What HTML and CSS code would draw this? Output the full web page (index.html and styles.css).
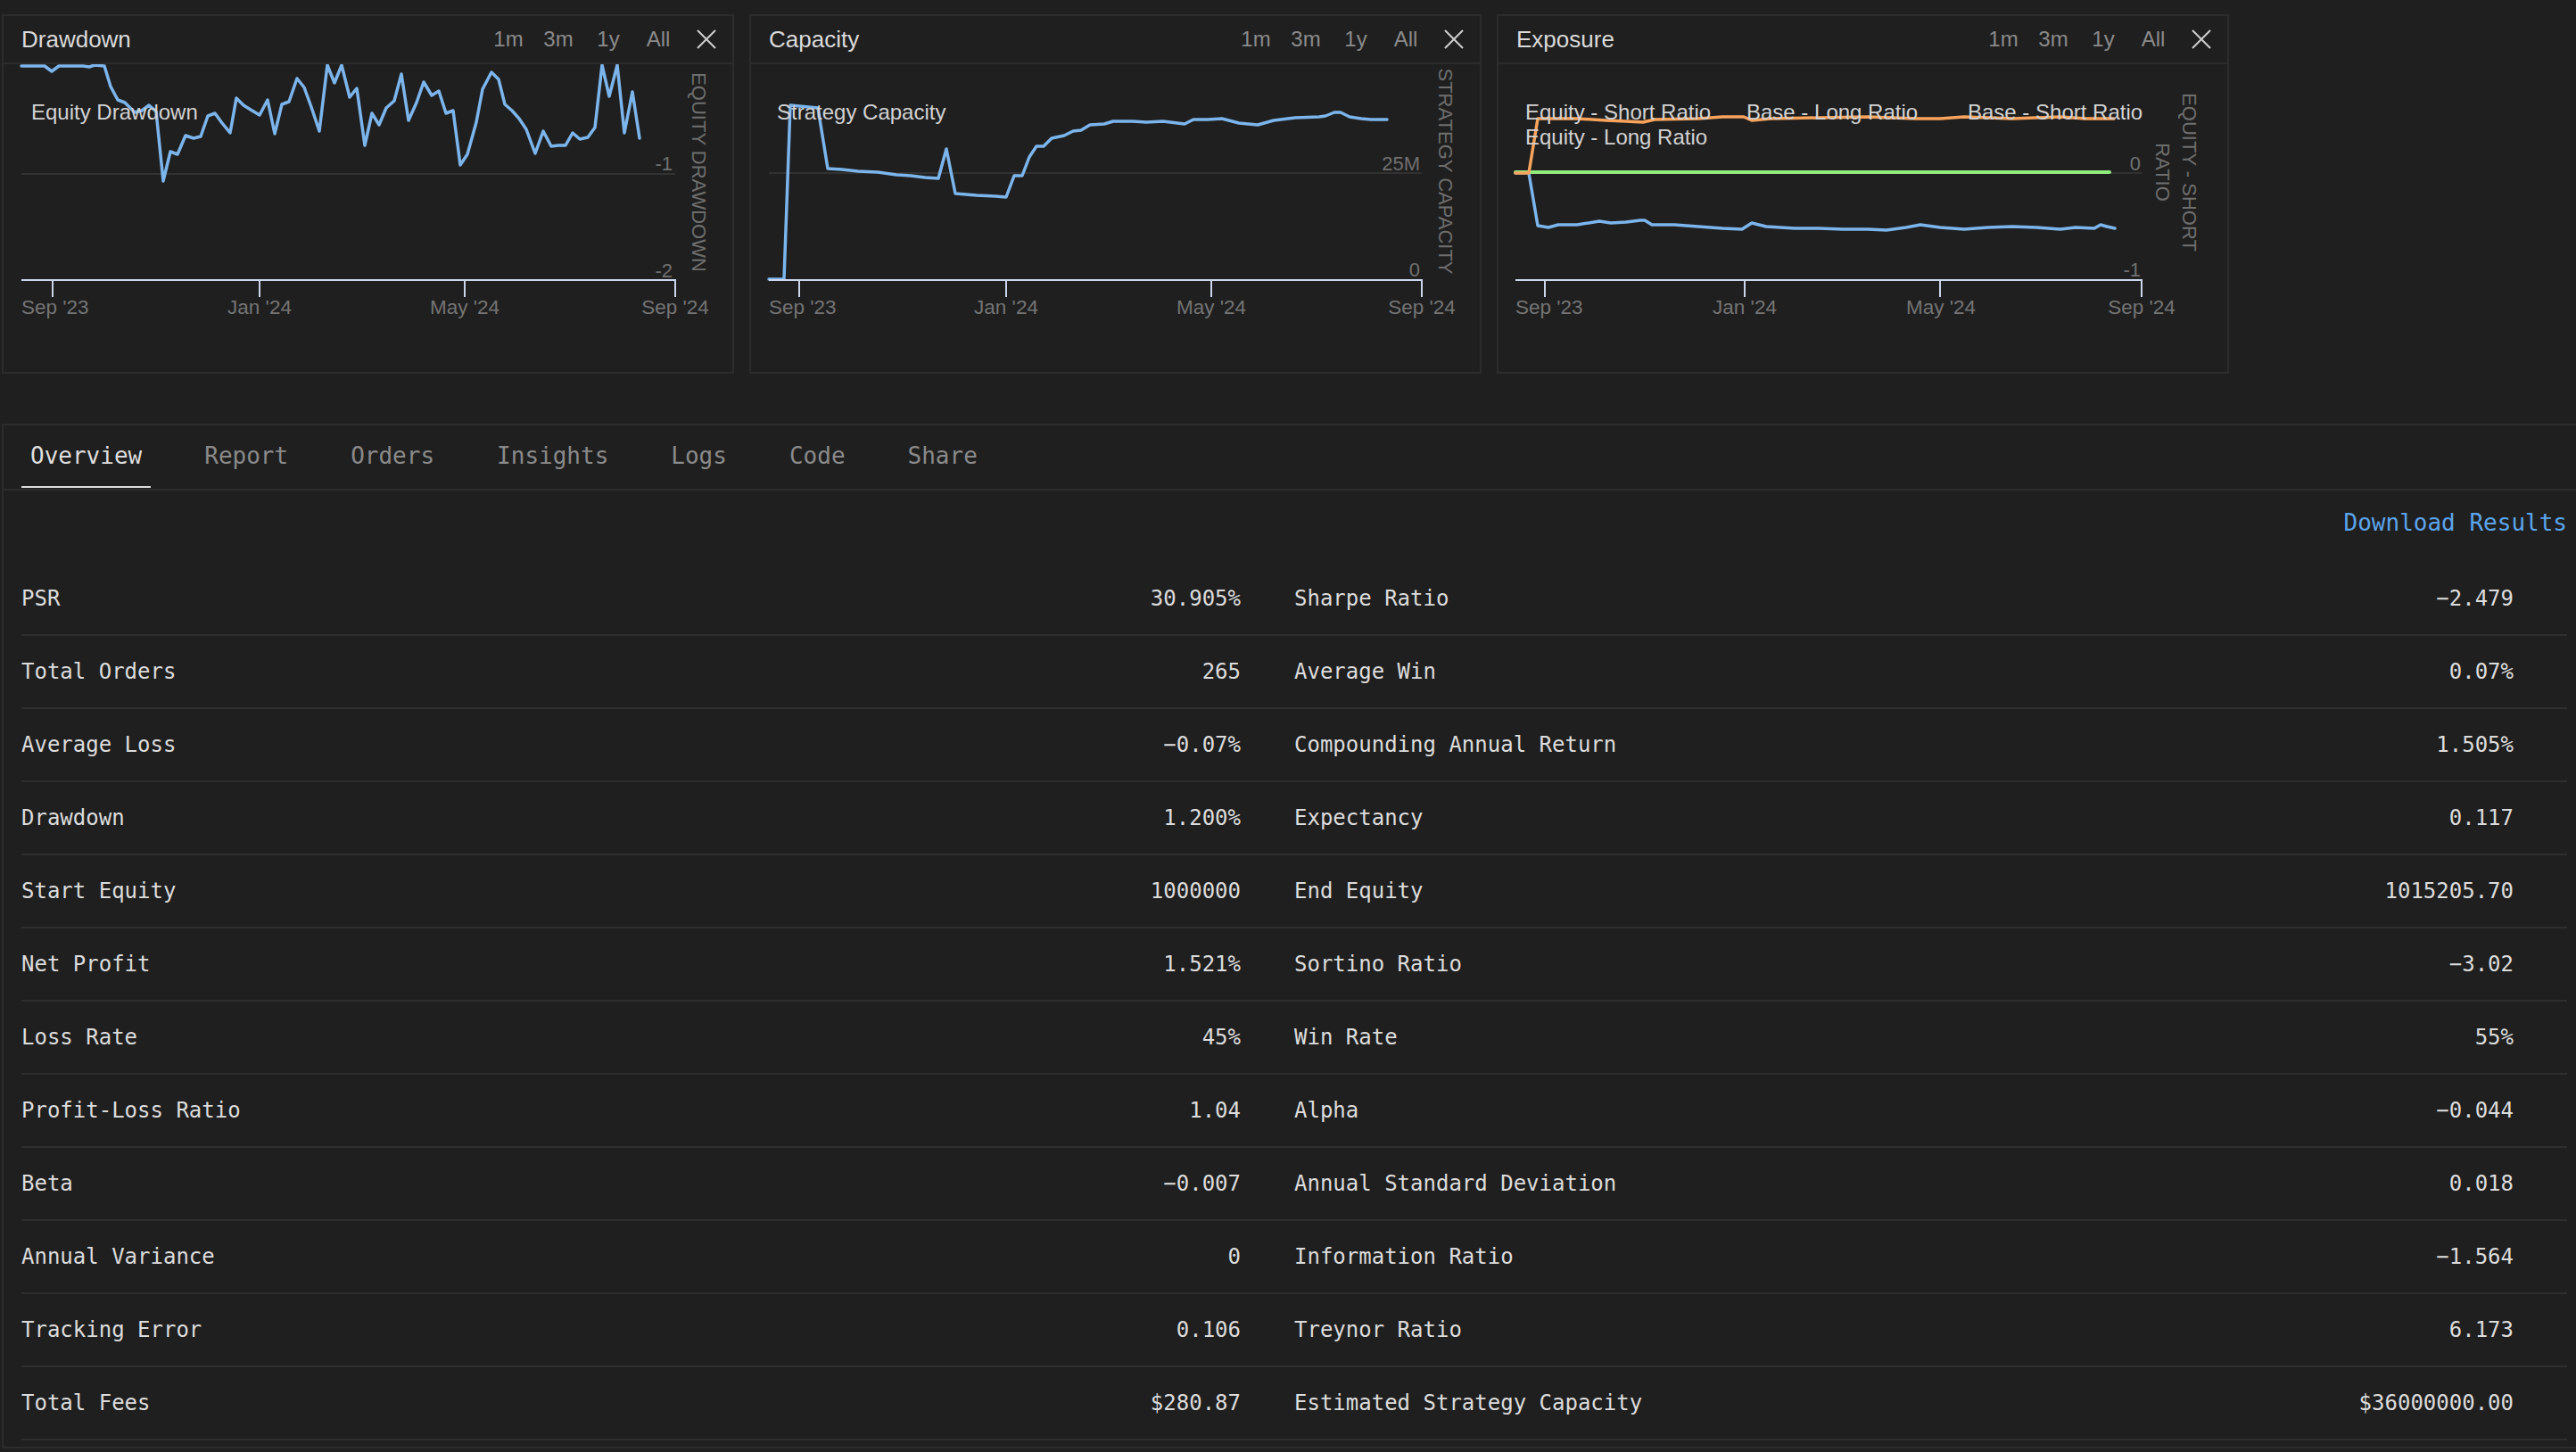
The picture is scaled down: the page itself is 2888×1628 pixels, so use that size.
FILE: index.html
```html
<!DOCTYPE html>
<html lang="en">
<head>
<meta charset="utf-8">
<title>Backtest Overview</title>
<link rel="stylesheet" href="styles.css">
</head>
<body>
<div class="page">
  <div class="charts">
    <div class="card">
      <div class="card-head">
        <span class="card-title">Drawdown</span>
        <div class="ranges"><span class="range">1m</span><span class="range">3m</span><span class="range">1y</span><span class="range">All</span></div>
        <span class="close"><svg width="22" height="22" viewBox="0 0 22 22"><path d="M1 1L21 21M21 1L1 21" stroke="#cfcfcf" stroke-width="2" fill="none"/></svg></span>
      </div>
      <svg class="plot" width="817" height="345" viewBox="4 72 817 345">
        <line class="grid" x1="24" y1="195" x2="757" y2="195"/>
        <text class="ylab" x="754" y="183">-1</text>
        <text class="ylab" x="754" y="303">-2</text>
        <text class="ytitle" transform="translate(783 193) rotate(90)">EQUITY DRAWDOWN</text>
        <polyline class="s-blue" points="24,74 50,74 58,80 66,74 93,74 100,75 106,73 117,74 124,97 132,112 140,115 151,126 159,124 167,118 175,125 183,203 191,170 199,173 208,152 217,155 225,153 233,130 241,127 249,138 258,149 265,110 273,118 281,123 291,129 300,112 308,150 316,117 324,114 333,88 341,98 349,120 358,147 367,73 375,93 383,73 392,109 400,99 409,163 417,127 425,140 433,121 442,113 450,83 458,135 467,115 475,92 484,107 492,102 500,127 508,124 516,185 524,173 534,137 541,100 551,81 559,89 566,117 574,124 582,133 590,145 600,172 609,147 618,164 626,163 634,163 642,149 650,156 659,154 667,143 675,73 683,108 692,73 700,149 709,103 717,155"/>
        <line class="axis" x1="24" y1="314" x2="758" y2="314"/>
        <line class="axis" x1="59" y1="314" x2="59" y2="333"/>
        <line class="axis" x1="291" y1="314" x2="291" y2="333"/>
        <line class="axis" x1="521" y1="314" x2="521" y2="333"/>
        <line class="axis" x1="757" y1="314" x2="757" y2="333"/>
        <text class="xlab start" x="24" y="344">Sep '23</text>
        <text class="xlab" x="291" y="344">Jan '24</text>
        <text class="xlab" x="521" y="344">May '24</text>
        <text class="xlab" x="757" y="344">Sep '24</text>
        <text class="legend" x="35" y="125">Equity Drawdown</text>
      </svg>
    </div>
    <div class="card">
      <div class="card-head">
        <span class="card-title">Capacity</span>
        <div class="ranges"><span class="range">1m</span><span class="range">3m</span><span class="range">1y</span><span class="range">All</span></div>
        <span class="close"><svg width="22" height="22" viewBox="0 0 22 22"><path d="M1 1L21 21M21 1L1 21" stroke="#cfcfcf" stroke-width="2" fill="none"/></svg></span>
      </div>
      <svg class="plot" width="817" height="345" viewBox="842 72 817 345">
        <line class="grid" x1="862" y1="194" x2="1594" y2="194"/>
        <text class="ylab" x="1592" y="183">25M</text>
        <text class="ylab" x="1592" y="302">0</text>
        <text class="ytitle" transform="translate(1620 192) rotate(90)">STRATEGY CAPACITY</text>
        <polyline class="s-blue" points="862,313 879,313 886,118 917,121 928,189 944,190 962,192 984,193 1005,196 1021,197 1037,199 1052,200 1061,167 1071,217 1095,219 1116,220 1128,221 1137,197 1146,197 1154,176 1162,164 1170,164 1179,155 1193,152 1203,147 1212,146 1222,140 1238,139 1248,136 1269,136 1285,137 1304,136 1328,139 1338,134 1354,134 1370,133 1389,138 1410,140 1428,135 1436,134 1452,132 1479,131 1486,130 1496,126 1503,126 1513,131 1526,133 1537,134 1555,134"/>
        <line class="axis" x1="862" y1="314" x2="1595" y2="314"/>
        <line class="axis" x1="896" y1="314" x2="896" y2="333"/>
        <line class="axis" x1="1128" y1="314" x2="1128" y2="333"/>
        <line class="axis" x1="1358" y1="314" x2="1358" y2="333"/>
        <line class="axis" x1="1594" y1="314" x2="1594" y2="333"/>
        <text class="xlab start" x="862" y="344">Sep '23</text>
        <text class="xlab" x="1128" y="344">Jan '24</text>
        <text class="xlab" x="1358" y="344">May '24</text>
        <text class="xlab" x="1594" y="344">Sep '24</text>
        <text class="legend" x="871" y="125">Strategy Capacity</text>
      </svg>
    </div>
    <div class="card">
      <div class="card-head">
        <span class="card-title">Exposure</span>
        <div class="ranges"><span class="range">1m</span><span class="range">3m</span><span class="range">1y</span><span class="range">All</span></div>
        <span class="close"><svg width="22" height="22" viewBox="0 0 22 22"><path d="M1 1L21 21M21 1L1 21" stroke="#cfcfcf" stroke-width="2" fill="none"/></svg></span>
      </div>
      <svg class="plot" width="817" height="345" viewBox="1680 72 817 345">
        <line class="grid" x1="1699" y1="194" x2="2401" y2="194"/>
        <text class="ylab" x="2400" y="183">0</text>
        <text class="ylab" x="2400" y="302">-1</text>
        <text class="ytitle" transform="translate(2454 193) rotate(90)">EQUITY - SHORT</text>
        <text class="ytitle" transform="translate(2424 193) rotate(90)">RATIO</text>
        <polyline class="s-blue" points="1699,194 1714,194 1724,253 1736,255 1747,252 1768,252 1793,248 1806,250 1823,249 1839,247 1844,247 1852,252 1877,252 1904,254 1931,256 1953,257 1964,250 1980,254 2012,256 2039,256 2066,257 2094,257 2115,258 2137,255 2153,252 2175,255 2202,257 2229,255 2256,254 2283,255 2310,257 2327,255 2348,256 2355,252 2362,254 2371,256"/>
        <polyline class="s-green" points="1699,193 2365,193"/>
        <polyline class="s-orange" points="1699,194 1714,194 1724,133 1768,133 1801,135 1823,136 1842,137 1855,134 1904,133 1931,131 1955,131 1964,135 1985,133 2039,132 2094,131 2148,133 2175,133 2202,131 2256,133 2310,131 2338,133 2370,133"/>
        <line class="axis" x1="1699" y1="314" x2="2402" y2="314"/>
        <line class="axis" x1="1732" y1="314" x2="1732" y2="333"/>
        <line class="axis" x1="1956" y1="314" x2="1956" y2="333"/>
        <line class="axis" x1="2175" y1="314" x2="2175" y2="333"/>
        <line class="axis" x1="2401" y1="314" x2="2401" y2="333"/>
        <text class="xlab start" x="1699" y="344">Sep '23</text>
        <text class="xlab" x="1956" y="344">Jan '24</text>
        <text class="xlab" x="2176" y="344">May '24</text>
        <text class="xlab" x="2401" y="344">Sep '24</text>
        <text class="legend" x="1710" y="125">Equity - Short Ratio</text>
        <text class="legend" x="1958" y="125">Base - Long Ratio</text>
        <text class="legend" x="2206" y="125">Base - Short Ratio</text>
        <text class="legend" x="1710" y="153">Equity - Long Ratio</text>
      </svg>
    </div>
  </div>

  <div class="panel">
    <div class="tabs">
      <span class="tab active">Overview</span>
      <span class="tab">Report</span>
      <span class="tab">Orders</span>
      <span class="tab">Insights</span>
      <span class="tab">Logs</span>
      <span class="tab">Code</span>
      <span class="tab">Share</span>
    </div>
    <div class="panel-body">
      <div class="download-row"><a class="download">Download Results</a></div>
      <div class="stats">
        <div class="cell"><span>PSR</span><span>30.905%</span></div>
        <div class="cell"><span>Sharpe Ratio</span><span>−2.479</span></div>
        <div class="cell"><span>Total Orders</span><span>265</span></div>
        <div class="cell"><span>Average Win</span><span>0.07%</span></div>
        <div class="cell"><span>Average Loss</span><span>−0.07%</span></div>
        <div class="cell"><span>Compounding Annual Return</span><span>1.505%</span></div>
        <div class="cell"><span>Drawdown</span><span>1.200%</span></div>
        <div class="cell"><span>Expectancy</span><span>0.117</span></div>
        <div class="cell"><span>Start Equity</span><span>1000000</span></div>
        <div class="cell"><span>End Equity</span><span>1015205.70</span></div>
        <div class="cell"><span>Net Profit</span><span>1.521%</span></div>
        <div class="cell"><span>Sortino Ratio</span><span>−3.02</span></div>
        <div class="cell"><span>Loss Rate</span><span>45%</span></div>
        <div class="cell"><span>Win Rate</span><span>55%</span></div>
        <div class="cell"><span>Profit-Loss Ratio</span><span>1.04</span></div>
        <div class="cell"><span>Alpha</span><span>−0.044</span></div>
        <div class="cell"><span>Beta</span><span>−0.007</span></div>
        <div class="cell"><span>Annual Standard Deviation</span><span>0.018</span></div>
        <div class="cell"><span>Annual Variance</span><span>0</span></div>
        <div class="cell"><span>Information Ratio</span><span>−1.564</span></div>
        <div class="cell"><span>Tracking Error</span><span>0.106</span></div>
        <div class="cell"><span>Treynor Ratio</span><span>6.173</span></div>
        <div class="cell"><span>Total Fees</span><span>$280.87</span></div>
        <div class="cell"><span>Estimated Strategy Capacity</span><span>$36000000.00</span></div>
      </div>
    </div>
  </div>
</div>
</body>
</html>
```

FILE: styles.css
```css
* { box-sizing: border-box; }

html, body {
  margin: 0;
  padding: 0;
  background: #1f1f1f;
  width: 2888px;
  height: 1628px;
  overflow: hidden;
}

.page {
  width: 2888px;
  height: 1628px;
  display: flex;
  flex-direction: column;
  padding: 16px 0 0 2px;
}

.charts {
  display: flex;
  gap: 17px;
}

.card {
  width: 821px;
  height: 403px;
  border: 2px solid #2c2c2c;
  display: flex;
  flex-direction: column;
}

.card-head {
  height: 54px;
  border-bottom: 2px solid #2c2c2c;
  display: flex;
  align-items: center;
  padding: 0 18px 0 20px;
  font-family: "Liberation Sans", Arial, sans-serif;
}

.card-title {
  font-size: 26px;
  color: #dadada;
}

.ranges {
  margin-left: auto;
  display: flex;
}

.range {
  width: 56px;
  text-align: center;
  font-size: 24px;
  color: #8a8a8a;
}

.close {
  margin-left: 15px;
  width: 22px;
  height: 22px;
  display: flex;
}

.plot {
  display: block;
  font-family: "Liberation Sans", Arial, sans-serif;
}

.grid {
  stroke: #323232;
  stroke-width: 2;
}

.axis {
  stroke: #ccd6eb;
  stroke-width: 2;
}

.ylab {
  font-size: 22px;
  fill: #707070;
  text-anchor: end;
  dominant-baseline: central;
}

.ytitle {
  font-size: 22px;
  fill: #6e6e6e;
  text-anchor: middle;
  dominant-baseline: central;
}

.xlab {
  font-size: 22.5px;
  fill: #747474;
  text-anchor: middle;
  dominant-baseline: central;
}

.xlab.start {
  text-anchor: start;
}

.legend {
  font-size: 24px;
  fill: #d2d2d2;
  dominant-baseline: central;
}

.s-blue, .s-green, .s-orange {
  fill: none;
  stroke-width: 3.5;
  stroke-linejoin: round;
  stroke-linecap: round;
}

.s-blue { stroke: #7cb5ec; }
.s-green { stroke: #90ed7d; stroke-width: 4; }
.s-orange { stroke: #f7a35c; }

.panel {
  margin-top: 56px;
  border-top: 2px solid #2c2c2c;
  border-left: 2px solid #2c2c2c;
  border-bottom: 2px solid #2c2c2c;
  width: 2886px;
  height: 1149px;
  display: flex;
  flex-direction: column;
  font-family: "DejaVu Sans Mono", Menlo, monospace;
  font-size: 26px;
}

.tabs {
  height: 73px;
  border-bottom: 2px solid #2c2c2c;
  display: flex;
  align-items: flex-start;
  gap: 50px;
  padding-left: 20px;
}

.tab {
  padding: 19px 10px 19px;
  line-height: 30px;
  color: #8a8a8a;
  border-bottom: 2px solid transparent;
}

.tab.active {
  color: #dedede;
  border-bottom-color: #dcdcdc;
}

.panel-body {
  padding: 0 10px 0 20px;
}

.download-row {
  height: 81px;
  padding-top: 21px;
  line-height: 30px;
  text-align: right;
}

.download {
  color: #5ca5ec;
}

.stats {
  display: grid;
  grid-template-columns: 1fr 1fr;
}

.cell {
  height: 82px;
  border-bottom: 2px solid #2e2e2e;
  display: flex;
  align-items: center;
  justify-content: space-between;
  padding-right: 60px;
  color: #dcdcdc;
  font-size: 24px;
  line-height: 30px;
}
```
